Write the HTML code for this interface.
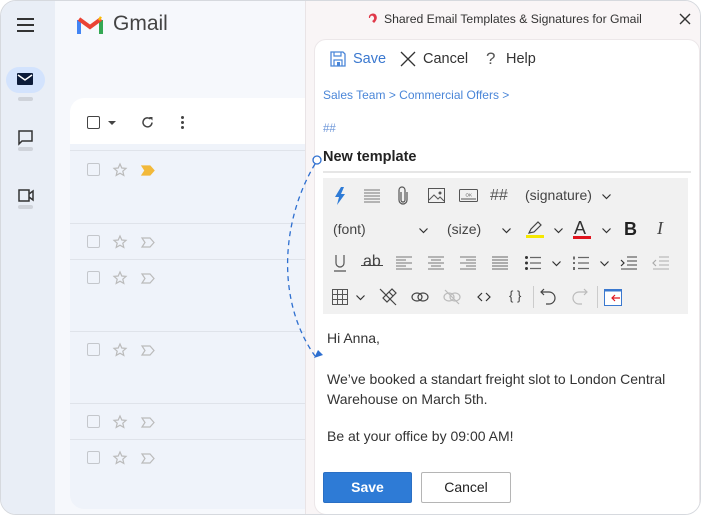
<!DOCTYPE html>
<html><head><meta charset="utf-8"><style>
*{margin:0;padding:0;box-sizing:border-box}
body{width:701px;height:515px;overflow:hidden;background:#fff;font-family:"Liberation Sans",sans-serif;position:relative}
.a{position:absolute}
.frame{left:0;top:0;width:701px;height:515px;border:1px solid #d6d9de;border-radius:16px;overflow:hidden;background:#f6f8fc}
.rail{left:0;top:0;width:54px;height:515px;background:#e9eef6}
.t{font-size:14px;color:#333}
.tb{color:#333;font-size:14px}
svg{position:absolute;overflow:visible}
</style></head><body>
<div class="a frame">
 <div class="a rail"></div>
 <div class="a" style="left:16px;top:17px;width:17px;height:2px;background:#333"></div>
 <div class="a" style="left:16px;top:23px;width:17px;height:2px;background:#333"></div>
 <div class="a" style="left:16px;top:29px;width:17px;height:2px;background:#333"></div>
 <div class="a" style="left:5px;top:66px;width:39px;height:26px;border-radius:13px;background:#d3e3fd"></div>
 <svg style="left:16px;top:72px" width="16" height="13" viewBox="0 0 16 13"><rect x="0" y="0" width="16" height="12" rx="1" fill="#0b1b3a"/><path d="M1 2l7 5 7-5" stroke="#fff" stroke-width="1.5" fill="none"/></svg>
 <div class="a" style="left:17px;top:96px;width:15px;height:4px;border-radius:2px;background:#cfd3da"></div>
 <svg style="left:17px;top:129px" width="15" height="15" viewBox="0 0 15 15"><path d="M1 1h13v10H4l-3 3z" fill="none" stroke="#333" stroke-width="1.5"/></svg>
 <div class="a" style="left:17px;top:146px;width:15px;height:4px;border-radius:2px;background:#cfd3da"></div>
 <svg style="left:17px;top:188px" width="16" height="13" viewBox="0 0 16 13"><path d="M1 1h10v11H1z M11 5l4-3v9l-4-3" fill="none" stroke="#333" stroke-width="1.5"/></svg>
 <div class="a" style="left:17px;top:204px;width:15px;height:4px;border-radius:2px;background:#cfd3da"></div>
 <svg style="left:76px;top:14px" width="26" height="20" viewBox="0 0 26 20"><path d="M2 19V5" stroke="#4285f4" stroke-width="4"/><path d="M24 19V5" stroke="#34a853" stroke-width="4"/><path d="M2 4l11 8 11-8" stroke="#ea4335" stroke-width="4" fill="none"/><path d="M22 3l2 1" stroke="#fbbc04" stroke-width="4"/></svg>
 <div class="a" style="left:112px;top:11px;font-size:21px;color:#444">Gmail</div>
 <div class="a" style="left:69px;top:97px;width:250px;height:411px;border-radius:14px;background:#eff3fa;overflow:hidden">
  <div class="a" style="left:0;top:0;width:250px;height:46px;background:#fff"></div>
 </div>
 <div class="a" style="left:86px;top:115px;width:13px;height:13px;border:1.5px solid #444;border-radius:2px"></div>
 <div class="a" style="left:107px;top:120px;width:0;height:0;border-left:4px solid transparent;border-right:4px solid transparent;border-top:4px solid #444"></div>
 <svg style="left:140px;top:115px" width="13" height="13" viewBox="0 0 13 13"><path d="M11 6.5A4.5 4.5 0 1 1 9.5 3" fill="none" stroke="#444" stroke-width="1.5"/><path d="M8 1h3.5v3.5z" fill="#444"/></svg>
 <div class="a" style="left:180px;top:115px;width:3px;height:3px;background:#444;border-radius:2px;box-shadow:0 5px 0 #444,0 10px 0 #444"></div>
 <div class="a" style="left:69px;top:149px;width:235px;height:1px;background:#dfe3ea"></div>
 <div class="a" style="left:69px;top:222px;width:235px;height:1px;background:#dfe3ea"></div>
 <div class="a" style="left:69px;top:258px;width:235px;height:1px;background:#dfe3ea"></div>
 <div class="a" style="left:69px;top:330px;width:235px;height:1px;background:#dfe3ea"></div>
 <div class="a" style="left:69px;top:402px;width:235px;height:1px;background:#dfe3ea"></div>
 <div class="a" style="left:69px;top:438px;width:235px;height:1px;background:#dfe3ea"></div>
 <div id="rows"></div>
 <div class="a" style="left:304px;top:0;width:397px;height:515px;background:#f9f5f6;border-left:1px solid #e9e4e6"></div>
 <svg style="left:366px;top:11px" width="12" height="13" viewBox="0 0 12 13"><path d="M2 6C1 2 7 0 9 3c2 3 0 6-2 8L5 9c2-1 3-3 1-5C5 3 3 4 3 6z" fill="#e0394a"/></svg>
 <div class="a" style="left:383px;top:11px;font-size:12.2px;color:#333">Shared Email Templates &amp; Signatures for Gmail</div>
 <svg style="left:679px;top:13px" width="10" height="10" viewBox="0 0 10 10"><path d="M0 0l10 10M10 0L0 10" stroke="#333" stroke-width="1.4"/></svg>
 <div class="a" style="left:313px;top:38px;width:386px;height:476px;background:#fff;border:1px solid #ece7e9;border-radius:12px"></div>
 <svg style="left:329px;top:50px" width="16" height="16" viewBox="0 0 16 16"><path d="M1 1h12l2 2v12H1z" fill="none" stroke="#4a86d8" stroke-width="1.3"/><path d="M4 1v4h7V1M4 15V9h8v6" fill="none" stroke="#4a86d8" stroke-width="1.2"/><rect x="7" y="11" width="3" height="4" fill="#4a86d8"/></svg>
 <div class="a" style="left:352px;top:50px;font-size:14.5px;color:#3a78cf">Save</div>
 <svg style="left:399px;top:50px" width="16" height="16" viewBox="0 0 16 16"><path d="M1 1l14 14M15 1L1 15" stroke="#333" stroke-width="1.3"/></svg>
 <div class="a" style="left:422px;top:50px;font-size:14.5px;color:#333">Cancel</div>
 <div class="a" style="left:485px;top:48px;font-size:17px;color:#555">?</div>
 <div class="a" style="left:505px;top:50px;font-size:14.5px;color:#333">Help</div>
 <div class="a" style="left:322px;top:87px;font-size:12px;color:#4a86d8">Sales Team &gt; Commercial Offers &gt;</div>
 <div class="a" style="left:322px;top:122px;font-size:11.5px;color:#6b95d8">##</div>
 <div class="a" style="left:322px;top:148px;font-size:14.5px;color:#222;font-weight:bold">New template</div>
 <div class="a" style="left:322px;top:170px;width:368px;height:2px;background:#e6e6e6"></div>
 <div class="a" style="left:322px;top:177px;width:365px;height:136px;background:#f1f1f1"></div>
 <div id="tb"></div>
 <div class="a t" style="left:326px;top:329px">Hi Anna,</div>
 <div class="a t" style="left:326px;top:368px;line-height:20px">We’ve booked a standart freight slot to London Central<br>Warehouse on March 5th.</div>
 <div class="a t" style="left:326px;top:427px">Be at your office by 09:00 AM!</div>
 <div class="a" style="left:322px;top:471px;width:89px;height:31px;background:#2e7bd6;border:1px solid #2a6fc4;border-radius:2px;color:#fff;font-weight:bold;font-size:14px;text-align:center;line-height:29px">Save</div>
 <div class="a" style="left:420px;top:471px;width:90px;height:31px;background:#fff;border:1.5px solid #b5b5b5;border-radius:2px;color:#222;font-size:14px;text-align:center;line-height:28px">Cancel</div>
 <svg style="left:0;top:0" width="701" height="515"><circle cx="316" cy="159" r="4" fill="#fff" stroke="#2e6fd0" stroke-width="1.3"/><path d="M314 163C280 220 275 300 314 355" fill="none" stroke="#2e6fd0" stroke-width="1.3" stroke-dasharray="5 4"/><path d="M313 357l9-3-5-5z" fill="#2e6fd0"/></svg>
</div>
<script>
var r=document.getElementById('rows'),h='';
[169,241,277,349,421,457].forEach(function(y,i){
h+='<div class="a" style="left:86px;top:'+(y-7)+'px;width:13px;height:13px;border:1.5px solid #c4c7cc;border-radius:2px"></div>';
h+='<svg style="left:112px;top:'+(y-7)+'px" width="14" height="14" viewBox="0 0 14 14"><path d="M7 1l1.8 4 4.2.4-3.2 2.8 1 4.2L7 10.2 3.2 12.4l1-4.2L1 5.4l4.2-.4z" fill="none" stroke="#bbb" stroke-width="1.2"/></svg>';
h+='<svg style="left:140px;top:'+(y-5)+'px" width="14" height="11" viewBox="0 0 14 11"><path d="M1 1h8l4 4.5-4 4.5H1l3-4.5z" fill="'+(i==0?'#f2b93a':'none')+'" stroke="'+(i==0?'#f2b93a':'#bbb')+'" stroke-width="1.2"/></svg>';
});
r.outerHTML=h;
var t='';
function chev(x,y){return '<svg style="left:'+(x-4)+'px;top:'+(y-2)+'px" width="9" height="5" viewBox="0 0 9 5"><path d="M.5 .5l4 4 4-4" fill="none" stroke="#333" stroke-width="1.2"/></svg>';}
function txt(x,y,s,st){return '<div class="a tb" style="left:'+x+'px;top:'+(y-9)+'px;'+(st||'')+'">'+s+'</div>';}
function lines(x,y,al,col){var s='<svg style="left:'+(x-8)+'px;top:'+(y-7)+'px" width="16" height="14" viewBox="0 0 16 14">';for(var i=0;i<5;i++){var L=al=='j'||i%2==0?16:10;var x0=al=='l'?0:al=='c'?(16-L)/2:al=='r'?16-L:0;s+='<path d="M'+x0+' '+(1+i*3)+'h'+L+'" stroke="'+(col||'#777')+'" stroke-width="1"/>';}return s+'</svg>';}
var y1=195,y2=229,y3=262,y4=296;
t+='<svg style="left:333px;top:186px" width="12" height="18" viewBox="0 0 12 18"><path d="M7 0L1 10h4l-2 8 8-11H7l3-7z" fill="#2e7bd6"/></svg>';
t+=lines(371,y1,'j','#777');
t+='<svg style="left:397px;top:186px" width="10" height="18" viewBox="0 0 10 18"><path d="M3 5v8a2 2 0 0 0 4 0V3a3 3 0 0 0-6 0v10a4 4 0 0 0 8 0V5" fill="none" stroke="#555" stroke-width="1.2"/></svg>';
t+='<svg style="left:427px;top:187px" width="17" height="15" viewBox="0 0 17 15"><rect x=".5" y=".5" width="16" height="14" fill="none" stroke="#555"/><path d="M1 12l5-5 4 4 2-2 4 4" fill="none" stroke="#555"/><circle cx="12" cy="5" r="1.5" fill="#555"/></svg>';
t+='<svg style="left:458px;top:188px" width="19" height="13" viewBox="0 0 19 13"><rect x=".5" y=".5" width="18" height="12" rx="1" fill="none" stroke="#555"/><path d="M2 10h15" stroke="#555"/><text x="6.5" y="7.5" font-size="4.5" font-family="Liberation Sans" fill="#555">OK</text></svg>';
t+=txt(489,y1,'##','font-size:16px;color:#555');
t+=txt(524,y1,'(signature)','font-size:14px;color:#444');
t+=chev(605,y1);
t+=txt(332,y2,'(font)','font-size:14px;color:#444');t+=chev(422,y2);
t+=txt(446,y2,'(size)','font-size:14px;color:#444');t+=chev(505,y2);
t+='<svg style="left:525px;top:219px" width="18" height="19" viewBox="0 0 18 19"><path d="M3 13l2-4 7-7 3 3-7 7z" fill="none" stroke="#444" stroke-width="1.2"/><rect x="0" y="15" width="18" height="3" fill="#f5e800"/></svg>';t+=chev(557,y2);
t+='<div class="a" style="left:573px;top:217px;font-size:18px;color:#333">A</div><div class="a" style="left:572px;top:235px;width:18px;height:3px;background:#e0141e"></div>';t+=chev(605,y2);
t+='<div class="a" style="left:623px;top:218px;font-size:18px;font-weight:bold;color:#222">B</div>';
t+='<div class="a" style="left:656px;top:217px;font-size:18px;font-style:italic;color:#444;font-family:Liberation Serif">I</div>';
t+='<svg style="left:332px;top:253px" width="14" height="18" viewBox="0 0 14 18"><path d="M3 1v8a4 4 0 0 0 8 0V1M1 17h12" fill="none" stroke="#555" stroke-width="1.2"/></svg>';
t+='<div class="a" style="left:362px;top:252px;font-size:16px;color:#444">ab</div><div class="a" style="left:360px;top:264px;width:22px;height:1px;background:#444"></div>';
t+=lines(403,y3,'l');t+=lines(435,y3,'c');t+=lines(467,y3,'r');t+=lines(499,y3,'j','#666');
t+='<svg style="left:524px;top:255px" width="16" height="14" viewBox="0 0 16 14"><circle cx="1.5" cy="1.5" r="1.5" fill="#333"/><circle cx="1.5" cy="7" r="1.5" fill="#333"/><circle cx="1.5" cy="12.5" r="1.5" fill="#333"/><path d="M5 1.5h11M5 7h11M5 12.5h11" stroke="#666" stroke-width="1.2"/></svg>';t+=chev(555,y3);
t+='<svg style="left:572px;top:255px" width="16" height="14" viewBox="0 0 16 14"><path d="M1 .5v3M1 6v2M1 11v3" stroke="#333" stroke-width="1.4"/><path d="M5 1.5h11M5 7h11M5 12.5h11" stroke="#666" stroke-width="1.2"/></svg>';t+=chev(603,y3);
t+='<svg style="left:619px;top:255px" width="17" height="14" viewBox="0 0 17 14"><path d="M1 4l3 3-3 3" fill="none" stroke="#333" stroke-width="1.2"/><path d="M7 1h10M7 5h10M7 9h10M1 13h16" stroke="#666" stroke-width="1.2"/></svg>';
t+='<svg style="left:651px;top:255px" width="17" height="14" viewBox="0 0 17 14"><path d="M4 4L1 7l3 3" fill="none" stroke="#aaa" stroke-width="1.2"/><path d="M7 1h10M7 5h10M7 9h10M1 13h16" stroke="#bbb" stroke-width="1.2"/></svg>';
t+='<svg style="left:331px;top:288px" width="16" height="16" viewBox="0 0 16 16"><path d="M.5 .5h15v15H.5zM.5 5.5h15M.5 10.5h15M5.5 .5v15M10.5 .5v15" fill="none" stroke="#555"/></svg>';t+=chev(359,y4);
t+='<svg style="left:378px;top:287px" width="18" height="18" viewBox="0 0 18 18"><path d="M1 1l16 16M4 10l6-6 4 4-6 6zM10 4l3-3 4 4-3 3" fill="none" stroke="#444" stroke-width="1.2"/></svg>';
t+='<svg style="left:410px;top:290px" width="18" height="12" viewBox="0 0 18 12"><ellipse cx="6" cy="6" rx="5" ry="4" fill="none" stroke="#444" stroke-width="1.2"/><ellipse cx="12" cy="6" rx="5" ry="4" fill="none" stroke="#444" stroke-width="1.2"/></svg>';
t+='<svg style="left:442px;top:288px" width="18" height="16" viewBox="0 0 18 16"><ellipse cx="6" cy="8" rx="5" ry="4" fill="none" stroke="#bbb" stroke-width="1.2"/><ellipse cx="12" cy="8" rx="5" ry="4" fill="none" stroke="#bbb" stroke-width="1.2"/><path d="M2 1l14 14" stroke="#bbb" stroke-width="1.2"/></svg>';
t+='<svg style="left:476px;top:291px" width="14" height="10" viewBox="0 0 14 10"><path d="M5 1L1 5l4 4M9 1l4 4-4 4" fill="none" stroke="#333" stroke-width="1.2"/></svg>';
t+=txt(508,y4,'{ }','font-size:13px;color:#444');
t+='<div class="a" style="left:532px;top:285px;width:1px;height:22px;background:#ccc"></div>';
t+='<svg style="left:539px;top:287px" width="16" height="17" viewBox="0 0 16 17"><path d="M4 1L1 4l3 3M1 4h8a6 6 0 0 1 0 12H6" fill="none" stroke="#444" stroke-width="1.2"/></svg>';
t+='<svg style="left:571px;top:287px" width="16" height="17" viewBox="0 0 16 17"><path d="M12 1l3 3-3 3M15 4H7a6 6 0 0 0 0 12h3" fill="none" stroke="#bbb" stroke-width="1.2"/></svg>';
t+='<div class="a" style="left:596px;top:285px;width:1px;height:22px;background:#ccc"></div>';
t+='<svg style="left:603px;top:288px" width="18" height="17" viewBox="0 0 18 17"><rect x=".5" y=".5" width="17" height="16" fill="#fff" stroke="#3a78cf"/><path d="M.5 .5h17v2H.5z" fill="#3a78cf"/><path d="M16 9H8M11 6L8 9l3 3" fill="none" stroke="#e0141e" stroke-width="1.2"/></svg>';
document.getElementById('tb').outerHTML=t;
</script>
</body></html>
